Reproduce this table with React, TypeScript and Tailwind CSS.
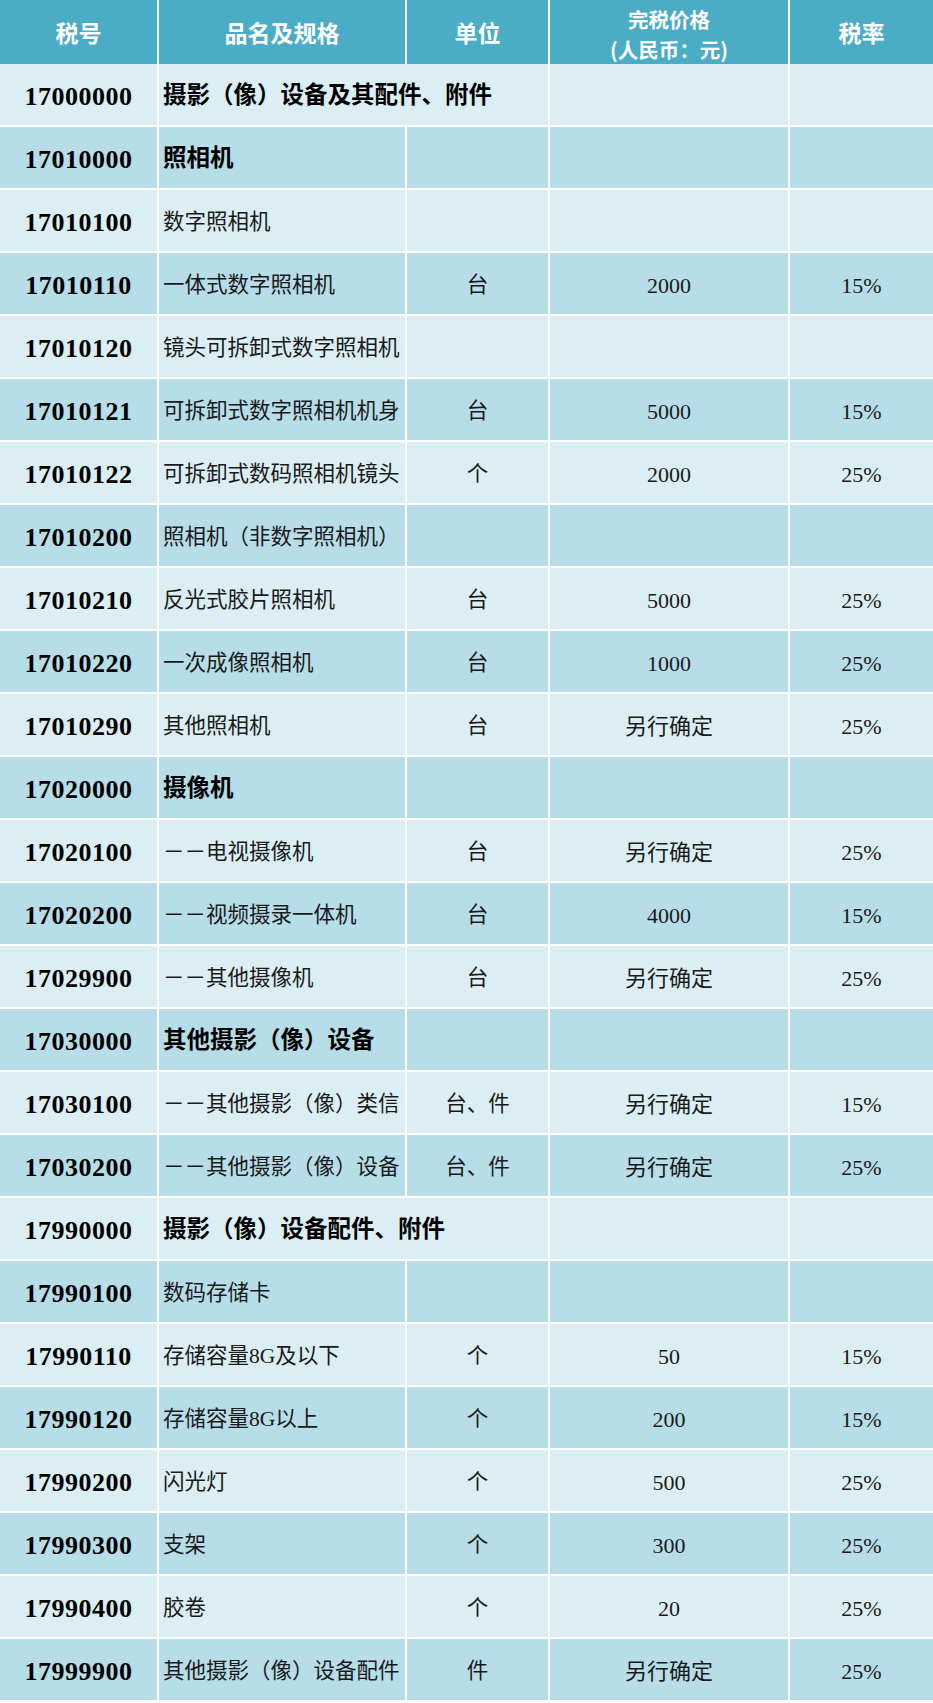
type Row = {
  code: string;
  name: string;
  unit?: string;
  price?: string;
  rate?: string;
  bold?: boolean;
  span?: boolean;
};

const rows: Row[] = [
  { code: "17000000", name: "摄影（像）设备及其配件、附件", bold: true, span: true },
  { code: "17010000", name: "照相机", bold: true },
  { code: "17010100", name: "数字照相机" },
  { code: "17010110", name: "一体式数字照相机", unit: "台", price: "2000", rate: "15%" },
  { code: "17010120", name: "镜头可拆卸式数字照相机" },
  { code: "17010121", name: "可拆卸式数字照相机机身", unit: "台", price: "5000", rate: "15%" },
  { code: "17010122", name: "可拆卸式数码照相机镜头", unit: "个", price: "2000", rate: "25%" },
  { code: "17010200", name: "照相机（非数字照相机）" },
  { code: "17010210", name: "反光式胶片照相机", unit: "台", price: "5000", rate: "25%" },
  { code: "17010220", name: "一次成像照相机", unit: "台", price: "1000", rate: "25%" },
  { code: "17010290", name: "其他照相机", unit: "台", price: "另行确定", rate: "25%" },
  { code: "17020000", name: "摄像机", bold: true },
  { code: "17020100", name: "－－电视摄像机", unit: "台", price: "另行确定", rate: "25%" },
  { code: "17020200", name: "－－视频摄录一体机", unit: "台", price: "4000", rate: "15%" },
  { code: "17029900", name: "－－其他摄像机", unit: "台", price: "另行确定", rate: "25%" },
  { code: "17030000", name: "其他摄影（像）设备", bold: true },
  { code: "17030100", name: "－－其他摄影（像）类信", unit: "台、件", price: "另行确定", rate: "15%" },
  { code: "17030200", name: "－－其他摄影（像）设备", unit: "台、件", price: "另行确定", rate: "25%" },
  { code: "17990000", name: "摄影（像）设备配件、附件", bold: true, span: true },
  { code: "17990100", name: "数码存储卡" },
  { code: "17990110", name: "存储容量8G及以下", unit: "个", price: "50", rate: "15%" },
  { code: "17990120", name: "存储容量8G以上", unit: "个", price: "200", rate: "15%" },
  { code: "17990200", name: "闪光灯", unit: "个", price: "500", rate: "25%" },
  { code: "17990300", name: "支架", unit: "个", price: "300", rate: "25%" },
  { code: "17990400", name: "胶卷", unit: "个", price: "20", rate: "25%" },
  { code: "17999900", name: "其他摄影（像）设备配件", unit: "件", price: "另行确定", rate: "25%" },
];

const serif = "font-['Liberation_Serif','Noto_Sans_CJK_SC',serif]";
const cols = "grid grid-cols-[157px_246px_141px_238px_143px] gap-x-[2px]";

function HeaderCell({ children }: { children: React.ReactNode }) {
  return (
    <div className="flex items-center justify-center bg-[#4bacc6] text-center text-[23px] font-bold text-white">
      {children}
    </div>
  );
}

function TableRow({ row, dark }: { row: Row; dark: boolean }) {
  const bg = dark ? "bg-[#b7dde8]" : "bg-[#daeef3]";
  const cell = `${bg} flex h-[61px] items-center pt-[3px]`;

  return (
    <div className={cols}>
      <div className={`${cell} justify-center text-[26px] font-bold tracking-[0.5px] text-black`}>
        {row.code}
      </div>
      <div
        className={`${cell} overflow-hidden whitespace-nowrap pl-[4px] ${
          row.span ? "col-span-2" : ""
        } ${
          row.bold
            ? "text-[23.5px] font-bold text-black"
            : "text-[21.5px] text-[#1a1a1a]"
        }`}
      >
        {row.name}
      </div>
      {!row.span && (
        <div className={`${cell} justify-center text-[21.5px] text-[#1a1a1a]`}>
          {row.unit}
        </div>
      )}
      <div className={`${cell} justify-center text-[22px] text-[#1a1a1a]`}>{row.price}</div>
      <div className={`${cell} justify-center text-[22px] text-[#1a1a1a]`}>{row.rate}</div>
    </div>
  );
}

export default function App() {
  return (
    <div className={`${serif} flex w-[933px] flex-col gap-y-[2px] bg-white`}>
      <div className={`${cols} h-[62px] font-['Noto_Sans_CJK_SC',sans-serif]`}>
        <HeaderCell>税号</HeaderCell>
        <HeaderCell>品名及规格</HeaderCell>
        <HeaderCell>单位</HeaderCell>
        <div className="flex flex-col items-center justify-center bg-[#4bacc6] pt-[4px] text-center text-[20.5px] font-bold leading-[30px] text-white">
          <span>完税价格</span>
          <span>(人民币：元)</span>
        </div>
        <HeaderCell>税率</HeaderCell>
      </div>
      {rows.map((row, i) => (
        <TableRow key={row.code} row={row} dark={i % 2 === 1} />
      ))}
    </div>
  );
}
